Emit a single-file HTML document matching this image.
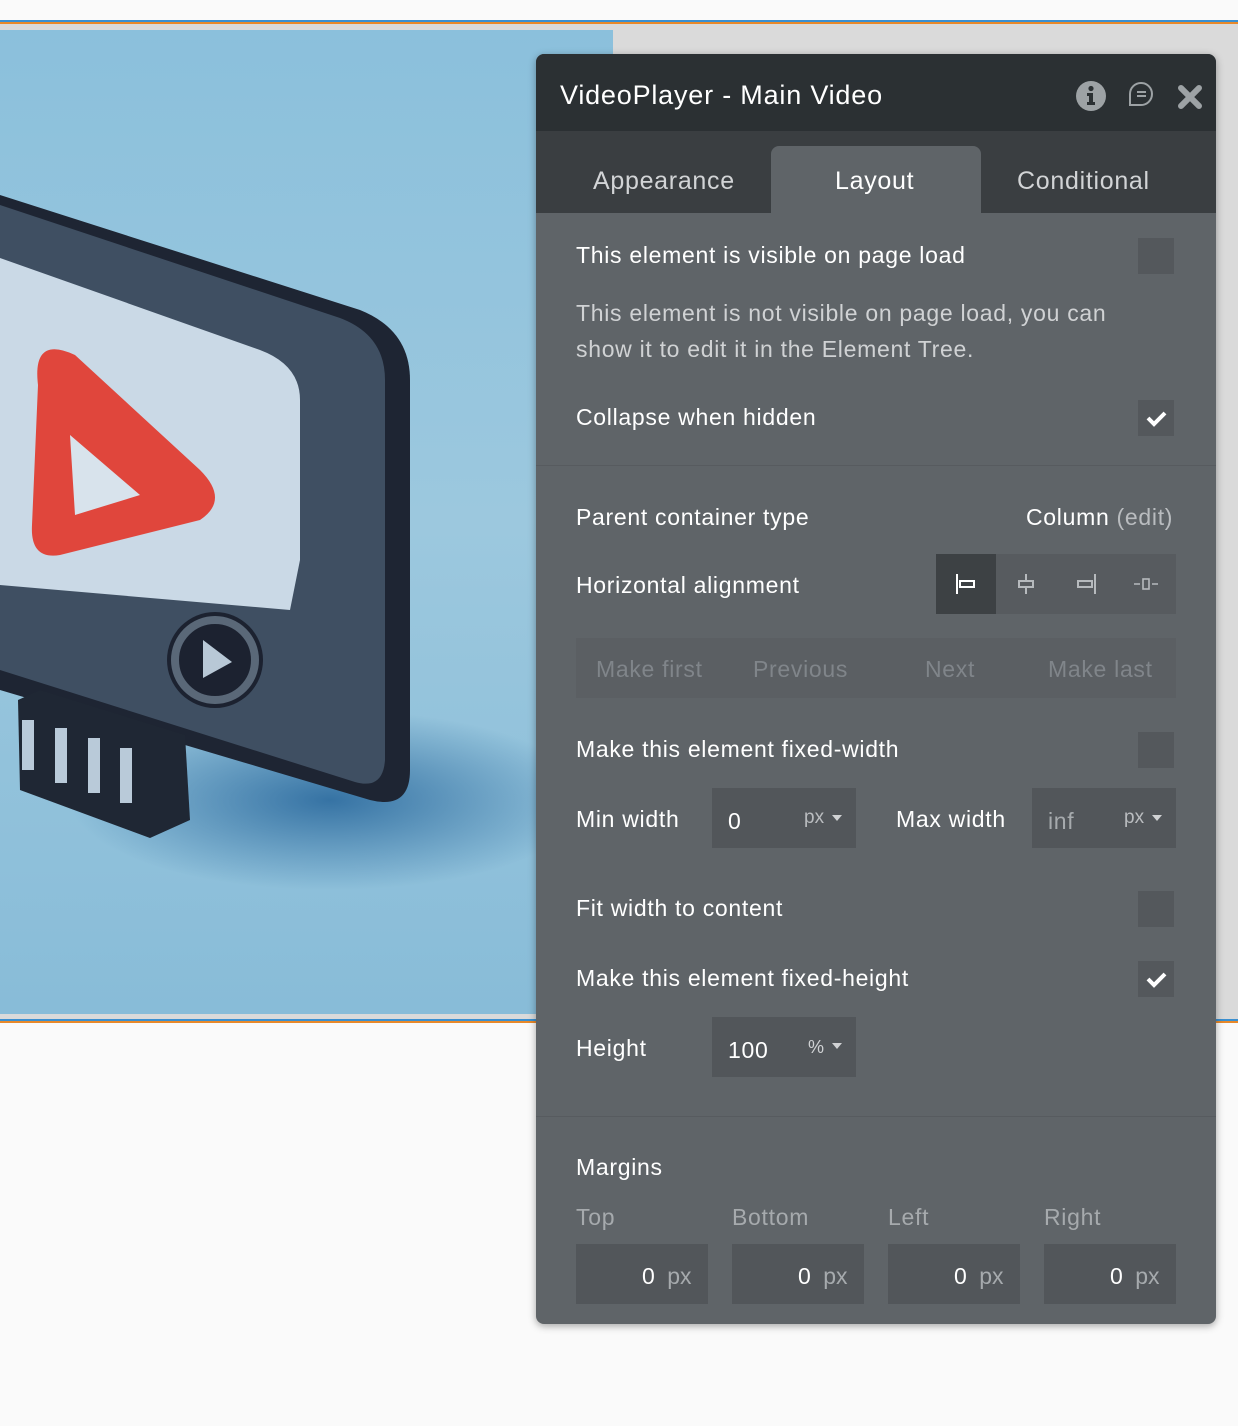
<!DOCTYPE html>
<html><head><meta charset="utf-8"><style>
*{margin:0;padding:0;box-sizing:border-box}
body{width:1238px;height:1426px;background:#fafafa;position:relative;overflow:hidden;font-family:"Liberation Sans",sans-serif}
.a{position:absolute}
.l{position:absolute;left:576px;color:#fff;font-size:23px;letter-spacing:0.7px;line-height:30px;white-space:nowrap}
.g{letter-spacing:0.7px}
.cb{position:absolute;left:1138px;width:36px;height:36px;background:#54585c}
.inp{position:absolute;background:#52565a}
</style></head><body>
<div class="a" style="left:0;top:20px;width:1238px;height:2px;background:#3a8fd0"></div>
<div class="a" style="left:0;top:22px;width:1238px;height:2px;background:#e8892a"></div>
<div class="a" style="left:0;top:24px;width:1238px;height:996px;background:#dadada"></div>
<div class="a" style="left:0;top:1019px;width:1238px;height:2px;background:#3a8fd0"></div>
<div class="a" style="left:0;top:1021px;width:1238px;height:2px;background:#e8892a"></div>
<svg class="a" style="left:0;top:30px" width="613" height="984" viewBox="0 30 613 984">
<defs>
<linearGradient id="bg" x1="0" y1="0" x2="0" y2="1"><stop offset="0" stop-color="#8bc0dc"/><stop offset="0.5" stop-color="#9cc8de"/><stop offset="1" stop-color="#88bcd8"/></linearGradient>
<radialGradient id="sh" cx="0.5" cy="0.5" r="0.5"><stop offset="0" stop-color="#1f5f96" stop-opacity="0.8"/><stop offset="1" stop-color="#1f5f96" stop-opacity="0"/></radialGradient>
</defs>
<rect x="0" y="30" width="613" height="984" fill="url(#bg)"/>
<ellipse cx="330" cy="800" rx="260" ry="90" fill="url(#sh)"/>
<path d="M0 195 L360 310 Q410 330 410 380 L410 770 Q410 810 370 800 L0 690 Z" fill="#1e2533"/>
<path d="M0 205 L340 318 Q385 335 385 380 L385 760 Q383 790 355 782 L0 670 Z" fill="#3f4f62"/>
<path d="M0 258 L260 350 Q300 365 300 400 L300 560 L290 610 L0 585 Z" fill="#cad9e6"/>
<path d="M38 385 Q32 335 75 355 L200 470 Q230 500 200 520 L60 555 Q30 560 32 525 Z" fill="#e0463c"/>
<path d="M70 435 L140 495 L75 515 Z" fill="#d8e3ec"/>
<circle cx="215" cy="660" r="48" fill="#1c2230"/>
<circle cx="215" cy="660" r="40" fill="none" stroke="#5a6878" stroke-width="8"/>
<path d="M203 640 L232 662 L203 678 Z" fill="#b8c8d6"/>
<path d="M18 700 L40 690 L185 735 L190 820 L150 838 L20 790 Z" fill="#1f2734"/>
<rect x="22" y="720" width="12" height="50" fill="#b9cad9"/><rect x="55" y="728" width="12" height="55" fill="#b9cad9"/><rect x="88" y="738" width="12" height="55" fill="#b9cad9"/><rect x="120" y="748" width="12" height="55" fill="#b9cad9"/>
</svg>
<div class="a" style="left:536px;top:54px;width:680px;height:1270px;background:#5f6468;border-radius:8px;box-shadow:0 2px 8px rgba(0,0,0,.35);overflow:hidden">
<div class="a" style="left:0;top:0;width:680px;height:77px;background:#2b3033"></div>
<div class="a" style="left:0;top:77px;width:680px;height:82px;background:#3a3e41"></div>
<div class="a" style="left:235px;top:92px;width:210px;height:67px;background:#5f6468;border-radius:8px 8px 0 0"></div>
</div>
<div class="a" style="left:560px;top:78px;color:#fff;font-size:27px;letter-spacing:0.8px;line-height:34px">VideoPlayer - Main Video</div>
<svg class="a" style="left:1074px;top:79px" width="34" height="34" viewBox="0 0 34 34"><circle cx="17" cy="17" r="15" fill="#9da2a5"/><circle cx="17" cy="9.5" r="2.6" fill="#2b3033"/><path d="M13 14h6v9h2v3h-8v-3h2v-6h-2z" fill="#2b3033"/></svg>
<svg class="a" style="left:1127px;top:80px" width="28" height="28" viewBox="0 0 28 28"><path d="M3 25 L3 14 A11 11 0 1 1 14 25 Z" fill="none" stroke="#9da2a5" stroke-width="2"/><path d="M10 12h9M10 16h9" stroke="#9da2a5" stroke-width="2"/></svg>
<svg class="a" style="left:1177px;top:84px" width="26" height="26" viewBox="0 0 26 26"><path d="M4 4L22 22M22 4L4 22" stroke="#9da2a5" stroke-width="6" stroke-linecap="round"/></svg>
<div class="a g" style="left:593px;top:165px;color:#d2d4d6;font-size:25px;line-height:32px">Appearance</div>
<div class="a g" style="left:835px;top:165px;color:#fff;font-size:25px;line-height:32px">Layout</div>
<div class="a g" style="left:1017px;top:165px;color:#d2d4d6;font-size:25px;line-height:32px">Conditional</div>

<div class="l" style="top:240px">This element is visible on page load</div>
<div class="cb" style="top:238px"></div>
<div class="l" style="top:298px;color:#d0d2d4">This element is not visible on page load, you can</div>
<div class="l" style="top:334px;color:#d0d2d4">show it to edit it in the Element Tree.</div>
<div class="l" style="top:402px">Collapse when hidden</div>
<div class="cb" style="top:400px"><svg width="36" height="36"><path d="M10 18l6 6 11-11" fill="none" stroke="#fff" stroke-width="4"/></svg></div>
<div class="a" style="left:536px;top:465px;width:680px;height:1px;background:#575b5f"></div>
<div class="l" style="top:502px">Parent container type</div>
<div class="a g" style="left:1026px;top:502px;font-size:23px;line-height:30px;color:#fff">Column <span style="color:#b9bcbf">(edit)</span></div>
<div class="l" style="top:570px">Horizontal alignment</div>
<div class="a" style="left:936px;top:554px;width:240px;height:60px;background:#575b5f"></div>
<div class="a" style="left:936px;top:554px;width:60px;height:60px;background:#3d4144"></div>
<svg class="a" style="left:936px;top:554px" width="240" height="60">
<path d="M21 20v20" stroke="#fff" stroke-width="2"/><rect x="24" y="27" width="14" height="6" fill="none" stroke="#fff" stroke-width="2"/>
<path d="M90 20v20" stroke="#b6babd" stroke-width="2"/><rect x="83" y="27" width="14" height="6" fill="#575b5f" stroke="#b6babd" stroke-width="2"/>
<path d="M159 20v20" stroke="#b6babd" stroke-width="2"/><rect x="142" y="27" width="14" height="6" fill="none" stroke="#b6babd" stroke-width="2"/>
<rect x="207" y="25" width="6" height="10" fill="none" stroke="#b6babd" stroke-width="1.6"/><path d="M198 30h6M216 30h6" stroke="#b6babd" stroke-width="1.6"/>
</svg>
<div class="a" style="left:576px;top:638px;width:600px;height:60px;background:#5b5f63"></div>
<div class="a g" style="left:596px;top:654px;color:#80858a;font-size:23px;line-height:30px">Make first</div>
<div class="a g" style="left:753px;top:654px;color:#80858a;font-size:23px;line-height:30px">Previous</div>
<div class="a g" style="left:925px;top:654px;color:#80858a;font-size:23px;line-height:30px">Next</div>
<div class="a g" style="left:1048px;top:654px;color:#80858a;font-size:23px;line-height:30px">Make last</div>
<div class="l" style="top:734px">Make this element fixed-width</div>
<div class="cb" style="top:732px"></div>
<div class="l" style="top:804px">Min width</div>
<div class="inp" style="left:712px;top:788px;width:144px;height:60px"></div>
<div class="a" style="left:728px;top:806px;color:#fff;font-size:23px;line-height:30px">0</div>
<div class="a" style="left:804px;top:804px;color:#b9bcbf;font-size:19px;line-height:28px">px</div>
<div class="a" style="left:832px;top:815px;border:5px solid transparent;border-top:6px solid #d0d2d4"></div>
<div class="a g" style="left:896px;top:804px;color:#fff;font-size:23px;line-height:30px">Max width</div>
<div class="inp" style="left:1032px;top:788px;width:144px;height:60px"></div>
<div class="a g" style="left:1048px;top:806px;color:#a6aaad;font-size:23px;line-height:30px">inf</div>
<div class="a" style="left:1124px;top:804px;color:#b9bcbf;font-size:19px;line-height:28px">px</div>
<div class="a" style="left:1152px;top:815px;border:5px solid transparent;border-top:6px solid #d0d2d4"></div>
<div class="l" style="top:893px">Fit width to content</div>
<div class="cb" style="top:891px"></div>
<div class="l" style="top:963px">Make this element fixed-height</div>
<div class="cb" style="top:961px"><svg width="36" height="36"><path d="M10 18l6 6 11-11" fill="none" stroke="#fff" stroke-width="4"/></svg></div>
<div class="l" style="top:1033px">Height</div>
<div class="inp" style="left:712px;top:1017px;width:144px;height:60px"></div>
<div class="a g" style="left:728px;top:1035px;color:#fff;font-size:23px;line-height:30px">100</div>
<div class="a" style="left:808px;top:1033px;color:#d0d2d4;font-size:18px;line-height:28px">%</div>
<div class="a" style="left:832px;top:1043px;border:5px solid transparent;border-top:6px solid #d0d2d4"></div>
<div class="a" style="left:536px;top:1116px;width:680px;height:1px;background:#575b5f"></div>
<div class="l" style="top:1152px">Margins</div>
<div class="a g" style="left:576px;top:1202px;color:#a6aaad;font-size:23px;line-height:30px">Top</div>
<div class="a g" style="left:732px;top:1202px;color:#a6aaad;font-size:23px;line-height:30px">Bottom</div>
<div class="a g" style="left:888px;top:1202px;color:#a6aaad;font-size:23px;line-height:30px">Left</div>
<div class="a g" style="left:1044px;top:1202px;color:#a6aaad;font-size:23px;line-height:30px">Right</div>
<div class="inp" style="left:576px;top:1244px;width:132px;height:60px"></div>
<div class="inp" style="left:732px;top:1244px;width:132px;height:60px"></div>
<div class="inp" style="left:888px;top:1244px;width:132px;height:60px"></div>
<div class="inp" style="left:1044px;top:1244px;width:132px;height:60px"></div>
<div class="a" style="left:642px;top:1261px;font-size:23px;line-height:30px;color:#fff">0 <span style="color:#a6aaad;margin-left:6px">px</span></div>
<div class="a" style="left:798px;top:1261px;font-size:23px;line-height:30px;color:#fff">0 <span style="color:#a6aaad;margin-left:6px">px</span></div>
<div class="a" style="left:954px;top:1261px;font-size:23px;line-height:30px;color:#fff">0 <span style="color:#a6aaad;margin-left:6px">px</span></div>
<div class="a" style="left:1110px;top:1261px;font-size:23px;line-height:30px;color:#fff">0 <span style="color:#a6aaad;margin-left:6px">px</span></div>
</body></html>
